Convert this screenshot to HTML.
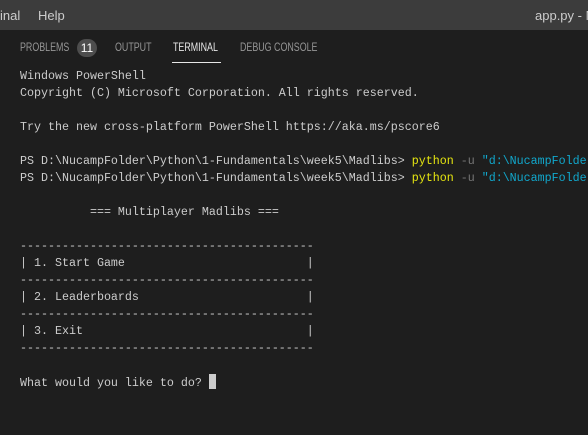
<!DOCTYPE html>
<html><head><style>
html,body{margin:0;padding:0;width:588px;height:435px;overflow:hidden;background:#1e1e1e}
.menu{position:absolute;left:0;top:0;width:588px;height:30px;background:#3c3c3c;color:#ccc;font:13px "Liberation Sans",sans-serif;overflow:hidden}
.menu span{position:absolute;top:8px;white-space:nowrap}
.tabs{position:absolute;top:30px;left:0;width:588px;height:35px;font:12px "Liberation Sans",sans-serif;color:#969696}
.tabs span{position:absolute;top:10px;white-space:nowrap;transform:scaleX(0.74);transform-origin:left}
.badge{position:absolute;left:77px;top:39px;width:20px;height:18px;border-radius:9px;background:#4d4d4d;color:#fff;font:12px "Liberation Sans",sans-serif;text-align:center;line-height:18px}
.ul{position:absolute;left:172px;top:62px;width:49px;height:1px;background:#e7e7e7}
.term{position:absolute;left:20px;top:68px;width:568px;height:360px;overflow:hidden}
pre{margin:0;font:11.67px/17px "Liberation Mono",monospace;color:#cccccc;white-space:pre}
.y{color:#e5e510}.g{color:#767676}.c{color:#11a8cd}
.cur{display:inline-block;width:7px;height:15px;background:#cccccc;vertical-align:-3px}
</style></head><body>
<div class="menu"><span style="left:0">inal</span><span style="left:38px">Help</span><span style="left:535px">app.py - M</span></div>
<div class="tabs"><span style="left:20px">PROBLEMS</span><span style="left:115px">OUTPUT</span><span style="left:173px;color:#e7e7e7">TERMINAL</span><span style="left:240px">DEBUG CONSOLE</span></div>
<div class="badge">11</div>
<div class="ul"></div>
<div class="term"><pre>Windows PowerShell
Copyright (C) Microsoft Corporation. All rights reserved.

Try the new cross-platform PowerShell https://aka.ms/pscore6

PS D:\NucampFolder\Python\1-Fundamentals\week5\Madlibs&gt; <span class="y">python</span> <span class="g">-u</span> <span class="c">"d:\NucampFolder\Python\1-Fundamentals"</span>
PS D:\NucampFolder\Python\1-Fundamentals\week5\Madlibs&gt; <span class="y">python</span> <span class="g">-u</span> <span class="c">"d:\NucampFolder\Python\1-Fundamentals"</span>

          === Multiplayer Madlibs ===

------------------------------------------
| 1. Start Game                          |
------------------------------------------
| 2. Leaderboards                        |
------------------------------------------
| 3. Exit                                |
------------------------------------------

What would you like to do? <span class="cur"></span></pre></div>
</body></html>
